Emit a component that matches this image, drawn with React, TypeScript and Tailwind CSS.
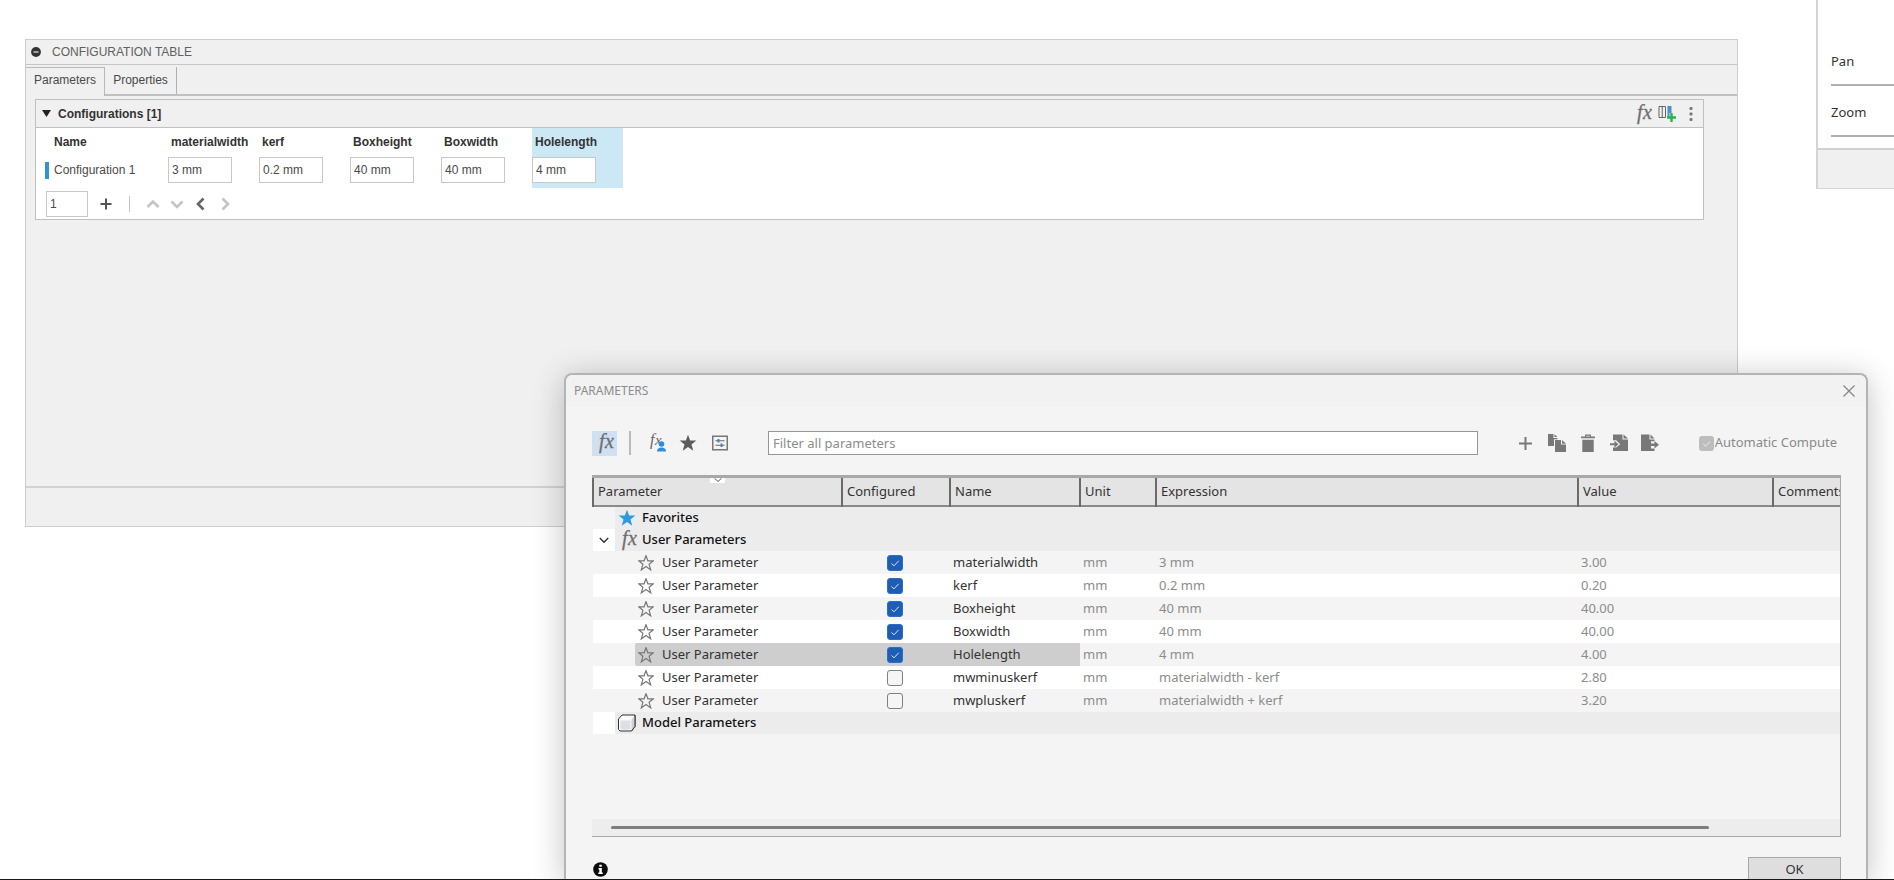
import { useState } from 'react';
import clsx from 'clsx';

interface Parameter {
  name: string;
  unit: string;
  expression: string;
  value: string;
  configured: boolean;
}

const parameters: Parameter[] = [
  { name: 'materialwidth', unit: 'mm', expression: '3 mm', value: '3.00', configured: true },
  { name: 'kerf', unit: 'mm', expression: '0.2 mm', value: '0.20', configured: true },
  { name: 'Boxheight', unit: 'mm', expression: '40 mm', value: '40.00', configured: true },
  { name: 'Boxwidth', unit: 'mm', expression: '40 mm', value: '40.00', configured: true },
  { name: 'Holelength', unit: 'mm', expression: '4 mm', value: '4.00', configured: true },
  { name: 'mwminuskerf', unit: 'mm', expression: 'materialwidth - kerf', value: '2.80', configured: false },
  { name: 'mwpluskerf', unit: 'mm', expression: 'materialwidth + kerf', value: '3.20', configured: false },
];

const columns = ['Parameter', 'Configured', 'Name', 'Unit', 'Expression', 'Value', 'Comments'];

const STAR = 'M8 .6l1.900 5.200h5.500l-4.300 3.500 1.600 5.600L8 11.600l-4.700 3.300 1.600-5.600L.6 5.800h5.500z';

function Fx({ className }: { className?: string }) {
  return (
    <svg
      className={clsx('h-[22px] w-5 overflow-visible', className)}
      viewBox="0 0 20 22"
      fill="#6e6e6e"
      stroke="#6e6e6e"
      strokeWidth=".3"
      fontFamily="Liberation Serif"
      fontStyle="italic"
    >
      <text x="4" y="16" fontSize="20">f</text>
      <text x="10" y="16" fontSize="20">x</text>
    </svg>
  );
}

function StarIcon({ className, outline }: { className?: string; outline?: boolean }) {
  return (
    <svg className={className} viewBox="0 0 16 16" fill={outline ? 'none' : 'currentColor'} stroke={outline ? 'currentColor' : 'none'} strokeWidth="1.200">
      <path d={STAR} />
    </svg>
  );
}

function Chevron({ d, active }: { d: string; active?: boolean }) {
  return (
    <svg className={clsx('size-4', active ? 'text-[#666]' : 'text-[#c4c4c4]')} viewBox="0 0 16 16" fill="none" stroke="currentColor" strokeWidth={2.6}>
      <path d={d} />
    </svg>
  );
}

function CheckBox({ checked, label, onChange }: { checked: boolean; label: string; onChange: () => void }) {
  return (
    <span className="relative flex size-4">
      <input
        type="checkbox"
        aria-label={label}
        checked={checked}
        onChange={onChange}
        className="size-4 appearance-none rounded-[3px] border border-[#808080] bg-[#f5f5f5] checked:border-[#2a6fcb] checked:bg-[#1f5cb4]"
      />
      {checked && (
        <svg className="pointer-events-none absolute inset-0" viewBox="0 0 16 16" fill="none" stroke="#d5e4f7">
          <path d="M4.500 8.500l2.500 2.300 4.700-5" />
        </svg>
      )}
    </span>
  );
}

/* Configuration table window */
function ConfigurationTable() {
  return (
    <section className="absolute top-[39px] right-[156px] left-[25px] flex h-[488px] flex-col border border-[#cdcdcd] bg-[#f0f0f0] font-['Liberation_Sans',Arial,sans-serif] text-xs text-[#4a4a4a]">
      <header className="flex h-[25px] items-center gap-[11px] border-b border-[#c6c6c6] pl-[5px]">
        <button aria-label="Collapse">
          <svg className="size-[10px]" viewBox="0 0 10 10">
            <circle cx="5" cy="5" r="4.900" fill="#333" />
            <path d="M2.500 5h5" stroke="#ddd" strokeWidth="1.300" />
          </svg>
        </button>
        <h2 className="text-[#606060]">CONFIGURATION TABLE</h2>
      </header>

      <nav className="mt-0.5 flex h-[29px]">
        <button className="h-full w-[79px] border-t border-r border-[#b8b8b8] pb-1">Parameters</button>
        <div className="flex flex-1 border-b-2 border-[#c0c0c0]">
          <button className="w-[72px] border-r border-[#b0b0b0] pb-0.5">Properties</button>
        </div>
      </nav>

      <div className="mt-[3px] mr-[33px] ml-[9px] border border-[#c0c0c0] bg-white">
        <div className="flex h-7 items-center border-b border-[#c0c0c0] bg-[#f0f0f0] pr-[7px] pl-1.5">
          <button className="flex items-center gap-[7px] font-bold text-[#333]">
            <svg className="size-[9px]" viewBox="0 0 9 9">
              <path d="M0 1h9L4.500 8z" fill="#222" />
            </svg>
            Configurations [1]
          </button>
          <div className="ml-auto flex items-center gap-[5px]">
            <button aria-label="Parameters">
              <Fx />
            </button>
            <button aria-label="Add column">
              <svg className="h-[18px] w-[18px]" viewBox="0 0 18 18" fill="none">
                <path d="M1 1.500h6.500v11H1zM4.250 1.500v11" stroke="#666" />
                <path d="M9.500 1h4v7h-2v4h-2z" fill="#4a8fd0" />
                <path d="M13.500 8v9M9 12.500h9" stroke="#28b34b" strokeWidth="2.400" />
              </svg>
            </button>
            <button aria-label="More" className="pl-[5px]">
              <svg className="h-4 w-[10px]" viewBox="0 0 10 16" fill="#777">
                <rect x="3.500" y="1" width="3" height="3" rx="1" />
                <rect x="3.500" y="6.500" width="3" height="3" rx="1" />
                <rect x="3.500" y="12" width="3" height="3" rx="1" />
              </svg>
            </button>
          </div>
        </div>

        <table className="table-fixed border-collapse">
          <colgroup>
            <col className="w-[132px]" />
            {parameters.slice(0, 5).map((p) => (
              <col key={p.name} className="w-[91px]" />
            ))}
          </colgroup>
          <thead>
            <tr className="h-[29px] text-left text-[#333]">
              <th className="p-0 pb-0.5 pl-[18px]">Name</th>
              {parameters.slice(0, 5).map((p) => (
                <th key={p.name} className={clsx('p-0 pb-0.5 pl-[3px]', p.name === 'Holelength' && 'bg-[#cce8f4]')}>
                  {p.name}
                </th>
              ))}
            </tr>
          </thead>
          <tbody>
            <tr className="h-[31px]">
              <td className="p-0 pb-[5px] pl-[9px]">
                <div className="flex items-center gap-[5px]">
                  <span className="h-[17px] w-1 bg-[#2f94d0]" />
                  Configuration 1
                </div>
              </td>
              {parameters.slice(0, 5).map((p) => (
                <td key={p.name} className={clsx('p-0 align-top', p.name === 'Holelength' && 'bg-[#cce8f4]')}>
                  <input
                    aria-label={p.name}
                    defaultValue={p.expression}
                    className="block h-[26px] w-16 border border-[#c8c8c8] bg-white px-[3px]"
                  />
                </td>
              ))}
            </tr>
          </tbody>
        </table>

        <div className="mt-[3px] mb-0.5 flex h-[26px] items-center pl-[10px]">
          <input aria-label="Rows to add" defaultValue="1" className="h-[26px] w-[42px] border border-[#c8c8c8] px-[3px]" />
          <button aria-label="Add row" className="ml-[12px]">
            <svg className="size-3" viewBox="0 0 12 12" stroke="#555" strokeWidth="2">
              <path d="M6 .5v11M.5 6h11" />
            </svg>
          </button>
          <span className="mr-[15px] ml-[17px] h-4 w-px bg-[#c4c4c4]" />
          <div className="flex gap-2">
            <button aria-label="Move up"><Chevron d="M2.500 11L8 5.500l5.500 5.500" /></button>
            <button aria-label="Move down"><Chevron d="M2.500 5.500L8 11l5.500-5.500" /></button>
            <button aria-label="Move left"><Chevron d="M10.500 2.500L5 8l5.500 5.500" active /></button>
            <button aria-label="Move right"><Chevron d="M5.500 2.500L11 8l-5.500 5.500" /></button>
          </div>
        </div>
      </div>

      <footer className="mt-auto h-[40px] border-t-2 border-[#d2d2d2]" />
    </section>
  );
}

/* Mouse shortcut panel, cut off by the window edge */
function NavigationPanel() {
  return (
    <aside className="absolute top-0 right-0 w-[78px] border-b border-l-2 border-[#d4d4d4] bg-white pt-[38px] font-['Noto_Sans',sans-serif] text-[13px] text-[#333]">
      <div className="ml-[13px] h-12 border-b-2 border-[#b0b0b0] pt-[13px] leading-5">Pan</div>
      <div className="ml-[13px] h-[51px] border-b-2 border-[#b0b0b0] pt-4 leading-5">Zoom</div>
      <div className="mt-[11px] h-10 border-t-2 border-[#d0d0d0] bg-[#f0f0f0]" />
    </aside>
  );
}

function Toolbar({ auto, onAuto }: { auto: boolean; onAuto: () => void }) {
  return (
    <div className="flex h-6 items-center">
      <button aria-label="All parameters" className="flex h-[25px] w-[25px] items-center justify-center bg-[#cfe0f2]">
        <Fx />
      </button>
      <span className="ml-3 h-6 w-0.5 bg-[#bababa]" />
      <button aria-label="User parameters" className="ml-4 flex items-start">
        <svg
          className="h-[18px] w-5 overflow-visible"
          viewBox="0 0 20 18"
          fill="#666"
          fontFamily="Liberation Serif"
          fontStyle="italic"
        >
          <text x="3" y="11" fontSize="16">f</text>
          <text x="8" y="11" fontSize="15">x</text>
          <circle cx="14.500" cy="10" r="2.800" fill="#2f8ddb" />
          <path d="M10 17.500c0-3 2-4 4.500-4s4.500 1 4.500 4z" fill="#2f8ddb" />
        </svg>
      </button>
      <button aria-label="Favorites" className="ml-3">
        <StarIcon className="size-[18px] text-[#5c5c5c]" />
      </button>
      <button aria-label="Settings" className="ml-[15px]">
        <svg className="size-4" viewBox="0 0 16 16" fill="none" stroke="#777">
          <rect x=".75" y="1.250" width="14.500" height="13.500" strokeWidth="1.500" />
          <path d="M3.500 5.750h9M3.500 10.250h9" stroke="#666" />
          <path d="M6.500 4v3.500M9.500 8.500V12" stroke="#4a80b8" strokeWidth="2" />
        </svg>
      </button>
      <input
        aria-label="Filter all parameters"
        placeholder="Filter all parameters"
        className="ml-10 h-6 min-w-0 flex-1 border border-[#969696] bg-white px-1 placeholder:text-[#8c8c8c]"
      />
      <div className="ml-[40px] flex items-center gap-[13px] text-[#787878]">
        <button aria-label="Add" className="mr-0.5">
          <svg className="size-[15px]" viewBox="0 0 15 15" stroke="currentColor" strokeWidth="2">
            <path d="M7.500 1v13M1 7.500h13" />
          </svg>
        </button>
        <button aria-label="Copy">
          <svg className="size-[18px]" viewBox="0 0 18 18" fill="currentColor">
            <path d="M0 0h5.500v4h4v1.200H6v6.800H0zM6.500 .3l3 2.700h-3z" />
            <path d="M7 6h6v4.500h5V18H7zM14 6l4 3.700h-4z" />
          </svg>
        </button>
        <button aria-label="Delete">
          <svg className="h-[18px] w-[18px]" viewBox="0 0 18 18" fill="currentColor">
            <path d="M2 2.500h4V.5h6v2h4v1.800H2zM7.300 1.700v.8h3.400v-.8zM3.300 5.700h11.400V18H3.300z" fillRule="evenodd" />
          </svg>
        </button>
        <button aria-label="Import">
          <svg className="size-[18px]" viewBox="0 0 18 18" fill="currentColor">
            <path d="M3 .5h9.500v5H18V17H3v-3.500h3.200l4-3.300-4-4H3zM13.500 .5L18 4.500h-4.500z" />
            <path d="M0 9.300h4.500V6.800l4 3.400-4 3.600v-2.600H0z" />
          </svg>
        </button>
        <button aria-label="Export">
          <svg className="size-[18px]" viewBox="0 0 18 18" fill="currentColor">
            <path d="M0 .5h8.500v5h5v1.800h-3.500v7.200h3.500V17H0zM9.500 .5l4 4h-4z" />
            <path d="M9 9.400h4.500V6.900l4.500 3.800-4.500 3.800V12H9z" />
          </svg>
        </button>
      </div>
      <label className="ml-[40px] flex items-center gap-px pr-1 text-[#8a8a8a]">
        <span className="relative flex size-[15px]">
          <input type="checkbox" checked={auto} onChange={onAuto} className="size-[15px] appearance-none rounded-[3px] bg-[#bdbdbd]" />
          <svg className="pointer-events-none absolute inset-0" viewBox="0 0 16 16" fill="none" stroke="#eee">
            <path d="M4.500 8.500l2.500 2.300 4.700-5" />
          </svg>
        </span>
        Automatic Compute
      </label>
    </div>
  );
}

function GroupRow({ label, icon, expandable, plain }: { label: string; icon: React.ReactNode; expandable?: boolean; plain?: boolean }) {
  return (
    <tr className="h-[22px] bg-[#ececec]">
      <td colSpan={7} className="p-0">
        <div className="flex h-[22px] items-center font-medium text-[#111]">
          <span className={clsx('flex h-full w-[22px] items-center justify-center', plain ? 'bg-[#f4f4f4]' : 'bg-white')}>
            {expandable && (
              <button aria-label="Collapse group">
                <svg className="size-[10px]" viewBox="0 0 10 10" fill="none" stroke="#333" strokeWidth="1.400">
                  <path d="M.8 3L5 7.200 9.200 3" />
                </svg>
              </button>
            )}
          </span>
          <span className="flex w-[27px] justify-start pl-[3px]">{icon}</span>
          {label}
        </div>
      </td>
    </tr>
  );
}

/* Parameters dialog */
function ParametersDialog() {
  const [rows, setRows] = useState(parameters);
  const [auto, setAuto] = useState(true);

  const toggle = (name: string) =>
    setRows(rows.map((r) => (r.name === name ? { ...r, configured: !r.configured } : r)));

  return (
    <section
      role="dialog"
      aria-label="Parameters"
      className="absolute top-[373px] right-[26px] left-[564px] rounded-t-lg border-2 border-b-0 border-[#b4b4b4] bg-[#f4f4f4] font-['Noto_Sans',sans-serif] text-[13px] text-[#333] shadow-[0_4px_32px_rgba(0,0,0,0.24)]"
    >
      <header className="flex h-8 items-center rounded-t-lg bg-[#f2f2f2] pr-[11px] pl-2">
        <h2 className="text-xs text-[#8c8c8c]">PARAMETERS</h2>
        <button aria-label="Close" className="ml-auto">
          <svg className="size-3" viewBox="0 0 12 12" stroke="#858585" strokeWidth="1.200">
            <path d="M.5 .5l11 11M11.500 .5l-11 11" />
          </svg>
        </button>
      </header>

      <div className="pt-6 pr-[25px] pl-[26px]">
        <Toolbar auto={auto} onAuto={() => setAuto(!auto)} />

        <div className="relative mt-5 overflow-hidden border-t-[3px] border-r border-b border-[#a8a8a8]">
          <table className="w-full table-fixed border-collapse">
            <colgroup>
              <col className="w-[249px]" />
              <col className="w-[108px]" />
              <col className="w-[130px]" />
              <col className="w-[76px]" />
              <col />
              <col className="w-[195px]" />
              <col className="w-[67px]" />
            </colgroup>
            <thead>
              <tr className="h-7 border-b-2 border-[#8a8a8a] bg-[#e4e4e4] text-left">
                {columns.map((c) => (
                  <th
                    key={c}
                    className="overflow-hidden border-l-2 border-l-[#6a6a6a] p-0 pl-1 font-normal whitespace-nowrap"
                  >
                    {c}
                  </th>
                ))}
              </tr>
            </thead>
            <tbody>
              <GroupRow label="Favorites" plain icon={<StarIcon className="size-[18px] text-[#2f9ae0]" />} />
              <GroupRow label="User Parameters" expandable icon={<Fx />} />
              {rows.map((row, i) => {
                const selected = row.name === 'Holelength';
                return (
                  <tr key={row.name} className={clsx('h-[23px]', i % 2 === 0 ? 'bg-[#f4f4f4]' : 'bg-white')}>
                    <td className="p-0 pl-[42px]">
                      <div className={clsx('flex h-[23px] items-center gap-2 rounded-l-xs pl-[3px]', selected && 'bg-[#cecece]')}>
                        <StarIcon outline className="size-4 text-[#777]" />
                        User Parameter
                      </div>
                    </td>
                    <td className={clsx('p-0 pl-[45px]', selected && 'bg-[#cecece]')}>
                      <CheckBox checked={row.configured} label={`Configure ${row.name}`} onChange={() => toggle(row.name)} />
                    </td>
                    <td className={clsx('p-0 pl-[3px]', selected && 'bg-[#cecece]')}>{row.name}</td>
                    <td className="p-0 pl-[3px] text-[#8c8c8c]">{row.unit}</td>
                    <td className="p-0 pl-[3px] text-[#8c8c8c]">{row.expression}</td>
                    <td className="p-0 pl-[3px] text-[#8c8c8c]">{row.value}</td>
                    <td className="p-0" />
                  </tr>
                );
              })}
              <GroupRow
                label="Model Parameters"
                icon={
                  <svg className="size-[18px]" viewBox="0 0 18 18" stroke="#333" strokeLinejoin="round">
                    <path d="M.5 5L4 1h13v11.500L13.500 17H2L.5 15.500z" fill="#fafafa" />
                    <path d="M2.500 6.500h10v9h-10z" fill="#dcdfe6" stroke="none" />
                    <path d="M13.500 5.500L17 1.500v11L13.500 17z" fill="#d0d0d0" stroke="none" />
                    <path d="M17 1v11.500L13.500 17" fill="none" />
                  </svg>
                }
              />
            </tbody>
          </table>

          {/* sort marker over the header */}
          <span className="absolute -top-0.5 left-[118px] flex h-[7px] w-[15px] items-center justify-center bg-white">
            <svg className="h-1 w-2" viewBox="0 0 8 4" fill="none" stroke="#555">
              <path d="M.5 .2L4 3.500 7.500 .2" />
            </svg>
          </span>

          <div className="mt-[85px] flex h-[17px] items-center bg-[#ededed] pr-[131px] pl-[19px]">
            <span className="h-[3px] flex-1 rounded-full bg-[#7e7e7e]" />
          </div>
        </div>

        <footer className="mt-5 flex h-[25px] items-center">
          <button aria-label="Information" className="ml-px">
            <svg className="size-[15px]" viewBox="0 0 15 15">
              <circle cx="7.500" cy="7.500" r="7.300" fill="#0c0c0c" />
              <path d="M6.300 2.700h2.500v2H6.300zM5.500 6h3.300v4.600h1v1.500H5.300v-1.500h1V7.400h-.8z" fill="#fff" />
            </svg>
          </button>
          <button className="ml-auto h-[25px] w-[93px] border border-[#a8a8a8] bg-[#dedede]">OK</button>
        </footer>
      </div>
    </section>
  );
}

export default function App() {
  return (
    <main className="relative h-screen overflow-hidden border-b border-[#1a1a1a] bg-white">
      <ConfigurationTable />
      <NavigationPanel />
      <ParametersDialog />
    </main>
  );
}
